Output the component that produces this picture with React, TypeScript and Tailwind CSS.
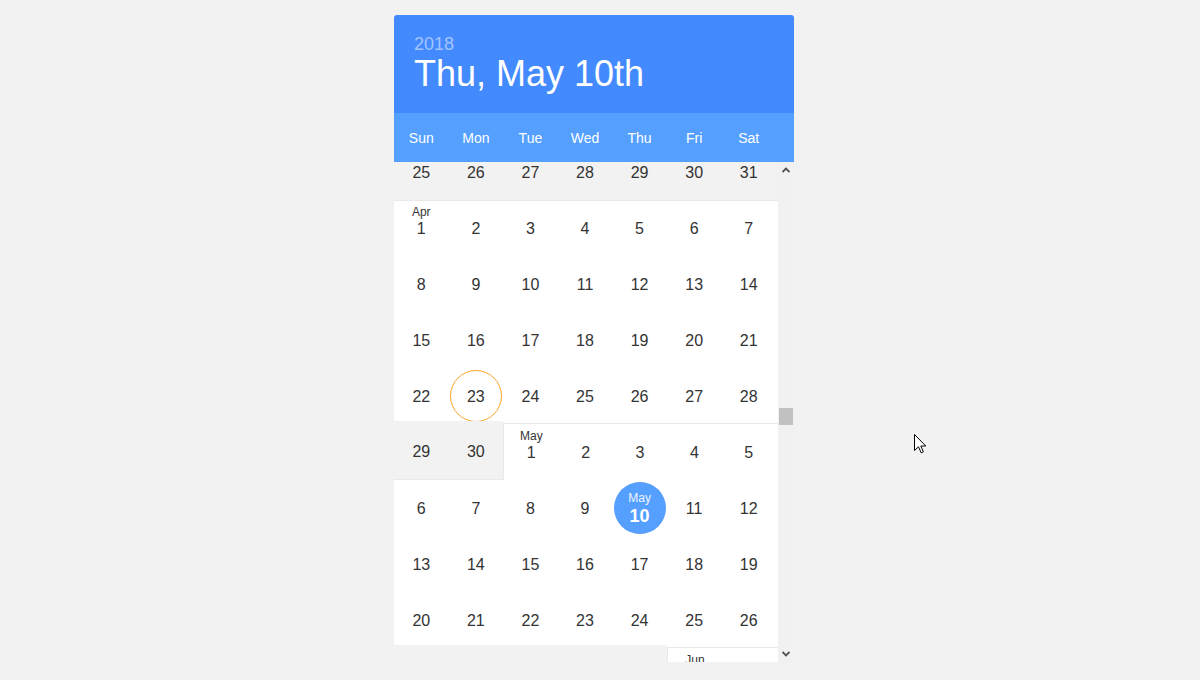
import React from 'react'

const weekdays = ['Sun', 'Mon', 'Tue', 'Wed', 'Thu', 'Fri', 'Sat']

type Cell = { n?: number; label?: string; today?: boolean; selected?: boolean }

type Row =
  | { kind: 'full'; grey?: boolean; top?: boolean; days: Cell[] }
  | { kind: 'partial'; grey: Cell[]; white: Cell[] }

const range = (a: number, b: number): Cell[] => {
  const out: Cell[] = []
  for (let i = a; i <= b; i++) out.push({ n: i })
  return out
}

// last row sits below the fold, only the Jun label peeks in
const hidden = (count: number): Cell[] => Array.from({ length: count }, () => ({}))

const rows: Row[] = [
  { kind: 'full', grey: true, days: range(25, 31) },
  { kind: 'full', top: true, days: [{ n: 1, label: 'Apr' }, ...range(2, 7)] },
  { kind: 'full', days: range(8, 14) },
  { kind: 'full', days: range(15, 21) },
  { kind: 'full', days: [{ n: 22 }, { n: 23, today: true }, ...range(24, 28)] },
  { kind: 'partial', grey: range(29, 30), white: [{ n: 1, label: 'May' }, ...range(2, 5)] },
  { kind: 'full', days: [...range(6, 9), { n: 10, label: 'May', selected: true }, ...range(11, 12)] },
  { kind: 'full', days: range(13, 19) },
  { kind: 'full', days: range(20, 26) },
  { kind: 'partial', grey: hidden(5), white: [{ label: 'Jun' }, {}] },
]

const spanClass: Record<number, string> = {
  2: 'col-span-2 grid grid-cols-2',
  5: 'col-span-5 grid grid-cols-5',
}

function Day({ cell }: { cell: Cell }) {
  if (cell.selected) {
    return (
      <div className="flex h-full items-center justify-center">
        <div className="flex h-[52px] w-[52px] flex-col items-center justify-center rounded-full bg-[#559fff] text-white">
          <span className="text-xs leading-[14px] text-white/90">{cell.label}</span>
          <span className="pt-px text-lg font-bold leading-5">{cell.n}</span>
        </div>
      </div>
    )
  }

  if (cell.today) {
    return (
      <div className="flex h-full items-center justify-center">
        <div className="flex h-[52px] w-[52px] items-center justify-center rounded-full border border-[#ffa726] pt-px text-base text-[#333]">
          {cell.n}
        </div>
      </div>
    )
  }

  if (cell.label) {
    return (
      <div className="flex h-full flex-col items-center justify-center pb-[14px] pt-px text-[#333]">
        <span className="text-xs leading-[14px]">{cell.label}</span>
        <span className="h-5 text-base leading-5">{cell.n}</span>
      </div>
    )
  }

  return <div className="flex h-full items-center justify-center pt-px text-base text-[#333]">{cell.n}</div>
}

function CalendarRow({ row }: { row: Row }) {
  if (row.kind === 'full') {
    return (
      <div
        className={`grid h-14 grid-cols-7 pr-[2px] ${row.grey ? 'bg-[#f2f2f2]' : 'bg-white'} ${
          row.top ? 'border-t border-[#e9e9e9]' : ''
        }`}
      >
        {row.days.map((d, i) => (
          <Day key={i} cell={d} />
        ))}
      </div>
    )
  }

  return (
    <div className="-mt-[3px] grid h-[59px] grid-cols-7 pr-[2px]">
      {row.grey.map((d, i) => (
        <div key={i} className="border-b border-[#e9e9e9] bg-[#f2f2f2] pt-[3px]">
          <Day cell={d} />
        </div>
      ))}
      <div
        className={`${spanClass[row.white.length]} -mr-[2px] mt-[2px] border-l border-t border-[#e9e9e9] bg-white pr-[2px]`}
      >
        {row.white.map((d, i) => (
          <Day key={i} cell={d} />
        ))}
      </div>
    </div>
  )
}

function Arrow({ up }: { up?: boolean }) {
  return (
    <div className="flex h-4 items-center justify-center">
      <svg width="8" height="6" viewBox="0 0 8 6" className={up ? '' : 'rotate-180'}>
        <path d="M0.5 5 L4 1.5 L7.5 5" fill="none" stroke="#505050" strokeWidth="1.8" />
      </svg>
    </div>
  )
}

export default function App() {
  return (
    <div className="relative h-[680px] w-full overflow-hidden bg-[#f2f2f2] pl-[394px] pt-[15px] font-['Liberation_Sans',Arial,sans-serif]">
      <div className="w-[400px] overflow-hidden rounded-t-[3px]">
        <div className="h-[98px] bg-[#448aff] pl-5 pt-[19px] text-white">
          <div className="text-lg leading-[21px] text-white/50">2018</div>
          <div className="-mt-px text-[36px] leading-10">Thu, May 10th</div>
        </div>

        <div className="h-[49px] bg-[#559fff] pr-[18px]">
          <div className="grid h-full grid-cols-7 items-center">
            {weekdays.map((w) => (
              <div key={w} className="text-center text-sm text-white">
                {w}
              </div>
            ))}
          </div>
        </div>

        <div className="flex h-[500px]">
          <div className="w-[384px] overflow-hidden bg-[#f2f2f2]">
            <div className="-mt-[18px]">
              {rows.map((r, i) => (
                <CalendarRow key={i} row={r} />
              ))}
            </div>
          </div>
          <div className="flex w-4 flex-col bg-[#f1f1f1]">
            <Arrow up />
            <div className="flex-1 pl-px">
              <div className="mt-[230px] h-[17px] w-[14px] bg-[#c1c1c1]" />
            </div>
            <Arrow />
          </div>
        </div>
      </div>

      <svg className="absolute left-[914px] top-[434px]" width="13" height="20" viewBox="0 0 13 20">
        <path
          d="M0.5 0.5 L0.5 16.5 L4.5 12.8 L7.2 18.8 L9.4 17.8 L6.8 12 L11.8 12 Z"
          fill="#fff"
          stroke="#000"
          strokeWidth="1"
          strokeLinejoin="miter"
        />
      </svg>
    </div>
  )
}
